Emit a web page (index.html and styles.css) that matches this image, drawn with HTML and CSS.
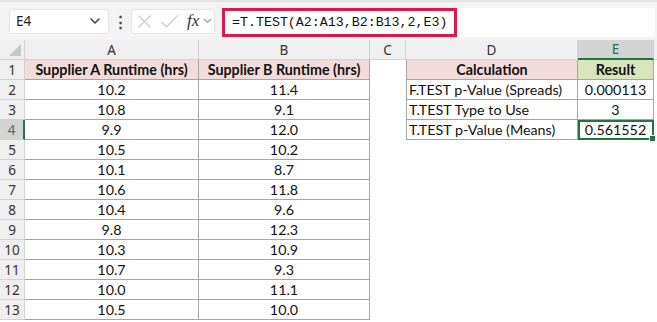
FILE: index.html
```
<html>
  <head>
    <meta name="viewport" content="width=device-width, initial-scale=1.0">
    <link rel="stylesheet" href="styles.css">
  </head>
  <body>
    <div class="toolbar">
      <div class="namebox">
        <span>E4</span>
        <svg width="12" height="8" viewBox="0 0 12 8"><path d="M1.5 1.5 L6 6 L10.5 1.5" fill="none" stroke="#333" stroke-width="1.3"/></svg>
      </div>
      <div class="dots">&#8942;</div>
      <div class="funcbox">
        <svg width="15" height="15" viewBox="0 0 15 15"><path d="M1.5 1.5 L13.5 13.5 M13.5 1.5 L1.5 13.5" stroke="#cacaca" stroke-width="1.2" fill="none"/></svg>
        <svg width="19" height="15" viewBox="0 0 19 15"><path d="M1.5 8 L6.5 13 L17.5 1.5" stroke="#cacaca" stroke-width="1.2" fill="none"/></svg>
        <span class="fx">fx</span>
        <svg width="9" height="6" viewBox="0 0 9 6"><path d="M1 1 L4.5 4.5 L8 1" fill="none" stroke="#999" stroke-width="1.1"/></svg>
      </div>
      <div class="formula">
        <div class="highlight">=T.TEST(A2:A13,B2:B13,2,E3)</div>
      </div>
    </div>

    <div class="sheet">
      <div class="corner"><svg width="14" height="14" viewBox="0 0 14 14"><path d="M13 1 L13 13 L1 13 Z" fill="#c6c6c6"/></svg></div>
      <div class="colhead">A</div>
      <div class="colhead">B</div>
      <div class="colhead">C</div>
      <div class="colhead">D</div>
      <div class="colhead sel">E</div>
      <div class="colhead last"></div>

      <div class="rowhead">1</div>
      <div class="cell b pink bold">Supplier A Runtime (hrs)</div>
      <div class="cell b pink bold">Supplier B Runtime (hrs)</div>
      <div class="cell"></div>
      <div class="cell b dl pink bold">Calculation</div>
      <div class="cell b green bold">Result</div>
      <div class="cell"></div>

      <div class="rowhead">2</div>
      <div class="cell b">10.2</div>
      <div class="cell b">11.4</div>
      <div class="cell"></div>
      <div class="cell b dl left">F.TEST p-Value (Spreads)</div>
      <div class="cell b">0.000113</div>
      <div class="cell"></div>

      <div class="rowhead">3</div>
      <div class="cell b">10.8</div>
      <div class="cell b">9.1</div>
      <div class="cell"></div>
      <div class="cell b dl left">T.TEST Type to Use</div>
      <div class="cell b">3</div>
      <div class="cell"></div>

      <div class="rowhead sel">4</div>
      <div class="cell b">9.9</div>
      <div class="cell b">12.0</div>
      <div class="cell"></div>
      <div class="cell b dl left">T.TEST p-Value (Means)</div>
      <div class="cell b active">0.561552<span class="handle"></span></div>
      <div class="cell"></div>

      <div class="rowhead">5</div>
      <div class="cell b">10.5</div>
      <div class="cell b">10.2</div>
      <div class="cell span4"></div>

      <div class="rowhead">6</div>
      <div class="cell b">10.1</div>
      <div class="cell b">8.7</div>
      <div class="cell span4"></div>

      <div class="rowhead">7</div>
      <div class="cell b">10.6</div>
      <div class="cell b">11.8</div>
      <div class="cell span4"></div>

      <div class="rowhead">8</div>
      <div class="cell b">10.4</div>
      <div class="cell b">9.6</div>
      <div class="cell span4"></div>

      <div class="rowhead">9</div>
      <div class="cell b">9.8</div>
      <div class="cell b">12.3</div>
      <div class="cell span4"></div>

      <div class="rowhead">10</div>
      <div class="cell b">10.3</div>
      <div class="cell b">10.9</div>
      <div class="cell span4"></div>

      <div class="rowhead">11</div>
      <div class="cell b">10.7</div>
      <div class="cell b">9.3</div>
      <div class="cell span4"></div>

      <div class="rowhead">12</div>
      <div class="cell b">10.0</div>
      <div class="cell b">11.1</div>
      <div class="cell span4"></div>

      <div class="rowhead">13</div>
      <div class="cell b">10.5</div>
      <div class="cell b">10.0</div>
      <div class="cell span4"></div>
    </div>
  </body>
</html>
```

FILE: styles.css
```
body {
  margin: 0;
  background: #fff;
  font-family: Lato, "Liberation Sans", sans-serif;
  overflow: hidden;
}
.toolbar {
  height: 40px;
  box-sizing: border-box;
  background: #f3f3f3;
  border-top: 2px solid #e3e3e3;
  display: flex;
  align-items: center;
  padding: 0 2px 0 9px;
}
.namebox {
  width: 100px; height: 25px;
  box-sizing: border-box;
  background: #fff;
  border: 1px solid #e4e4e4;
  border-radius: 4px;
  display: flex;
  align-items: center;
  justify-content: space-between;
  padding: 0 7px 0 6px;
  font-family: "Noto Sans", sans-serif;
  font-size: 13.5px;
  color: #222;
}
.dots {
  width: 22px;
  text-align: center;
  font-size: 15px;
  font-weight: bold;
  color: #444;
}
.funcbox {
  width: 84px; height: 25px;
  box-sizing: border-box;
  background: #fff;
  border: 1px solid #e4e4e4;
  border-radius: 4px;
  display: flex;
  align-items: center;
  gap: 8px;
  padding: 0 0 0 5px;
}
.fx {
  font-family: "Liberation Serif", serif;
  font-style: italic;
  font-size: 17px;
  color: #333;
  margin: 0 -4px 0 0;
}
.formula {
  flex: 1;
  margin-left: 7px;
  height: 29px;
  margin-top: 2px;
  background: #fff;
  display: flex;
}
.highlight {
  width: 235px;
  box-sizing: border-box;
  border: 3px solid #e0174e;
  padding-left: 7px;
  font-family: "Liberation Mono", monospace;
  font-size: 13.3px;
  line-height: 23px;
  color: #111;
}
.sheet {
  display: grid;
  grid-template-columns: 25px 174px 171px 36px 172px 76px 1fr;
  grid-auto-rows: 20px;
  font-size: 14.3px;
  color: #111;
}
.corner {
  background: #efefef;
  border-right: 1px solid #cfcfcf;
  border-bottom: 1px solid #cfcfcf;
  display: flex;
  align-items: flex-end;
  justify-content: flex-end;
  padding: 0 2px 2px 0;
}
.colhead, .rowhead {
  background: #efefef;
  border-right: 1px solid #d2d2d2;
  border-bottom: 1px solid #d2d2d2;
  display: flex;
  align-items: center;
  justify-content: center;
  font-family: "Noto Sans", sans-serif;
  font-size: 13.5px;
  color: #333;
}
.colhead.last {
  border-right: none;
}
.colhead.sel {
  background: #d3d3d3;
  color: #217346;
  border-bottom: 2px solid #217346;
}
.rowhead.sel {
  background: #d3d3d3;
  color: #5a6e66;
  border-right: 2px solid #217346;
}
.cell {
  display: flex;
  align-items: center;
  justify-content: center;
  white-space: nowrap;
  position: relative;
}
.cell.b {
  border-right: 1px solid #a5a5a5;
  border-bottom: 1px solid #a5a5a5;
}
.cell.dl {
  border-left: 1px solid #a5a5a5;
}
.cell.left {
  justify-content: flex-start;
  padding-left: 2px;
}
.span4 {
  grid-column: span 4;
}
.pink {
  background: #f2dcdb;
}
.green {
  background: #d8e4bc;
}
.bold {
  font-weight: bold;
}
.active {
  outline: 2px solid #217346;
  outline-offset: -2px;
}
.handle {
  position: absolute;
  right: -3px; bottom: -3px;
  width: 5px; height: 5px;
  background: #217346;
  border: 1px solid #fff;
}
```
